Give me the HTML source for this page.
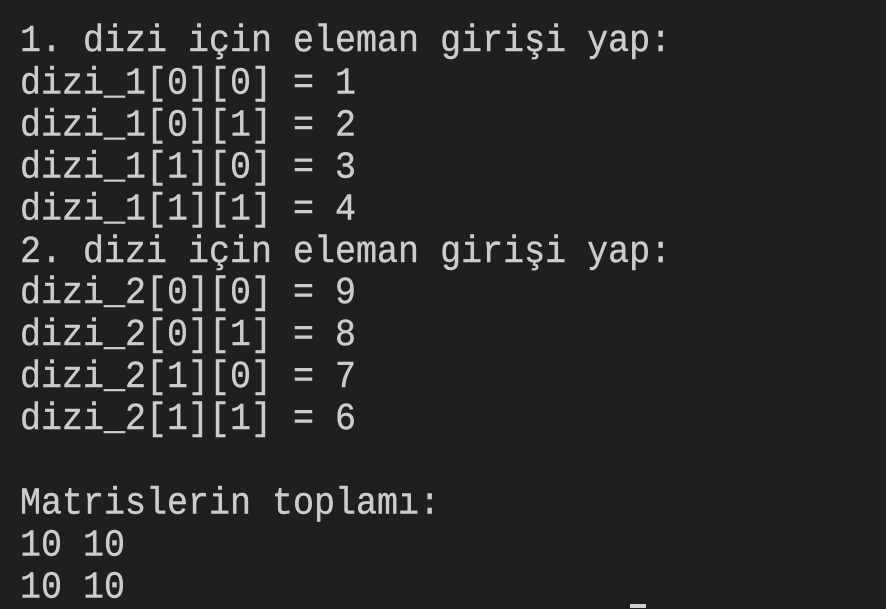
<!DOCTYPE html>
<html><head><style>
html,body{margin:0;padding:0;background:#1f1f1f;width:886px;height:608px;overflow:hidden}
pre{margin:0;position:absolute;left:20px;top:21px;font-family:"Liberation Mono",monospace;font-size:35px;line-height:38.9px;color:#cccccc;transform:scaleY(1.08);transform-origin:0 0;-webkit-text-stroke:0.4px #cccccc}
.cur{position:absolute;left:630px;top:604px;width:16px;height:4px;background:#d0d0d0}
</style></head><body>
<pre>1. dizi için eleman girişi yap:
dizi_1[0][0] = 1
dizi_1[0][1] = 2
dizi_1[1][0] = 3
dizi_1[1][1] = 4
2. dizi için eleman girişi yap:
dizi_2[0][0] = 9
dizi_2[0][1] = 8
dizi_2[1][0] = 7
dizi_2[1][1] = 6

Matrislerin toplamı:
10 10
10 10</pre>
<div class="cur"></div>
</body></html>
